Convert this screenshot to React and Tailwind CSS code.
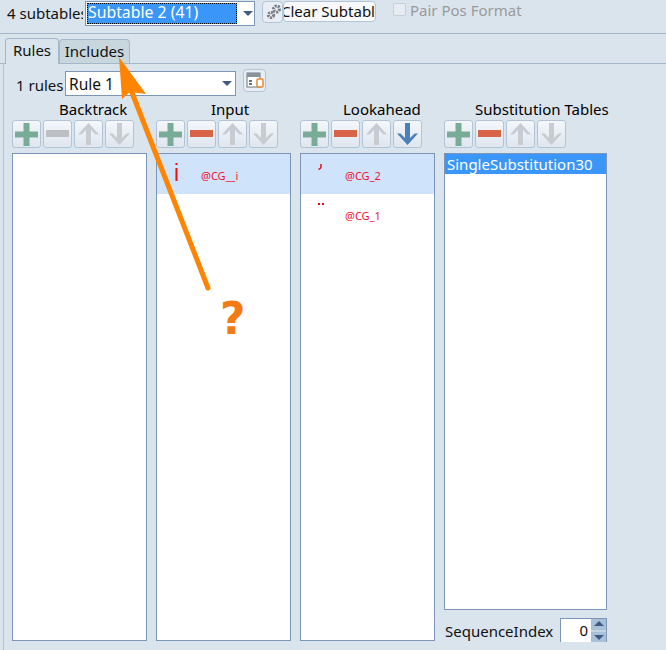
import { useState } from 'react'

const FONT = "font-['Noto_Sans','Open_Sans',sans-serif]"

function Caret() {
  return <div className="w-0 h-0 border-x-[5px] border-x-transparent border-t-[5px] border-t-[#3f5a85]" />
}

function PlusIcon({ on }) {
  return (
    <svg width="23" height="23" viewBox="0 0 23 23">
      <path d="M8.500 0h6v8.500h8.500v6h-8.500v8.500h-6v-8.500h-8.500v-6h8.500z" fill={on ? '#7aab98' : '#c0c4c8'} />
    </svg>
  )
}

function MinusIcon({ on }) {
  return (
    <svg width="23" height="8" viewBox="0 0 23 8">
      <rect width="23" height="7" fill={on ? '#d96548' : '#bcc0c4'} />
    </svg>
  )
}

function ArrowIcon({ dir, on }) {
  const color = on ? '#4a80b8' : '#c8ccd0'
  return (
    <svg width="23" height="24" viewBox="0 0 23 24" className={dir === 'down' ? 'rotate-180' : ''}>
      <path d="M11.500 1l10.500 11.500h-3.500l-4.500-4.500v15h-5v-15l-4.500 4.500h-3.500z" fill={color} />
    </svg>
  )
}

function ToolButton({ children }) {
  return (
    <button className="w-[29px] h-[28px] flex items-center justify-center rounded-[3px] border border-[#b4c4d8] bg-gradient-to-b from-[#f4f7fa] to-[#dfe6ee]">
      {children}
    </button>
  )
}

function Toolbar({ minus, down }) {
  return (
    <div className="flex gap-[2px]">
      <ToolButton><PlusIcon on /></ToolButton>
      <ToolButton><MinusIcon on={minus} /></ToolButton>
      <ToolButton><ArrowIcon dir="up" /></ToolButton>
      <ToolButton><ArrowIcon dir="down" on={down} /></ToolButton>
    </div>
  )
}

function GlyphRow({ glyph, name, selected }) {
  return (
    <div className={`relative h-[40px] ${selected ? 'bg-[#cfe3fa]' : ''}`}>
      <span className="absolute left-[44px] top-[15px] text-[11px] leading-[14px] text-[#f01030]">{name}</span>
      {glyph}
    </div>
  )
}

function Column({ label, labelClass, width, minus, down, children }) {
  return (
    <div className={`flex flex-col ${width}`}>
      <div className={`h-[21px] text-[15px] leading-[20px] text-black whitespace-nowrap ${labelClass}`}>{label}</div>
      <Toolbar minus={minus} down={down} />
      <div className="mt-[5px] h-[488px] border border-[#7d96b8] bg-white overflow-hidden">
        {children}
      </div>
    </div>
  )
}

export default function App() {
  const [tab, setTab] = useState('rules')

  return (
    <div className={`relative w-[666px] h-[650px] overflow-hidden bg-[#dae4ed] text-[15px] text-[#111] ${FONT}`}>
      <div className="h-[34px] border-b border-[#a5b7c8] flex items-start pt-[1px]">
        <div className="w-[76px] ml-[7px] mt-[1px] overflow-hidden whitespace-nowrap leading-[22px]">4 subtables</div>
        <div className="ml-[2px] w-[170px] h-[25px] border border-[#7d96b8] bg-white flex items-center p-[1px]">
          <div className="w-[150px] h-[21px] bg-[#3a96f8] text-white text-[15.800px] leading-[19px] pl-[1px] outline-1 outline-dotted outline-black -outline-offset-1">Subtable 2 (41)</div>
          <div className="ml-[6px]"><Caret /></div>
        </div>
        <div className="ml-[7px] w-[21px] h-[22px] rounded-[4px] border border-[#b4c4d8] bg-[#e8eef4] flex items-center justify-center">
          <svg width="15" height="16" viewBox="0 0 15 16" className="ml-[3px]">
            <circle cx="9.500" cy="5" r="3" fill="none" stroke="#777c82" strokeWidth="3" strokeDasharray="2 1" />
            <circle cx="4" cy="11" r="2.600" fill="none" stroke="#777c82" strokeWidth="3" strokeDasharray="2 1" />
          </svg>
        </div>
        <div className="w-[93px] h-[21px] rounded-[4px] border border-[#b4c4d8] bg-[#f6f8fa] overflow-hidden whitespace-nowrap leading-[18px] -indent-[3px]">Clear Subtable</div>
        <div className="ml-[17px] mt-[2px] w-[13px] h-[13px] rounded-[2px] border border-[#c4d0dc] bg-[#e6ecf2]" />
        <div className="ml-[4px] leading-[18px] text-[#9a9a9a]">Pair Pos Format</div>
      </div>

      <div className="h-[30px] border-b border-[#a5b7c8] flex items-end pl-[5px]">
        <button
          onClick={() => setTab('rules')}
          className="w-[54px] h-[26px] -mb-px border border-b-0 border-[#a5b7c8] rounded-t-[4px] bg-[#dae4ed] text-center leading-[22px] flex justify-center"
        >
          Rules
        </button>
        <button
          onClick={() => setTab('includes')}
          className="w-[71px] h-[24px] border border-b-0 border-[#a5b7c8] rounded-t-[4px] bg-[#c8d6de] text-center leading-[22px] flex justify-center"
        >
          Includes
        </button>
      </div>

      <div className="ml-[3px] border-l border-[#b4c4d4] h-[586px] pl-[8px]">
        {tab === 'rules' && (
          <>
            <div className="h-[31px] flex items-start pt-[7px]">
              <div className="ml-[4px] w-[49px] mt-[3px] whitespace-nowrap leading-[22px]">1 rules</div>
              <div className="w-[171px] h-[25px] border border-[#7d96b8] bg-white flex items-center justify-between pl-[3px] pr-[3px]">
                <span className="leading-[22px] text-[15.500px]">Rule 1</span>
                <Caret />
              </div>
              <div className="ml-[7px] -mt-[2px] w-[23px] h-[23px] rounded-[4px] border border-[#b4c4d8] bg-[#e8eef4] flex items-center justify-center">
                <svg width="18" height="17" viewBox="0 0 18 17">
                  <rect x="1" y="1" width="13" height="14" fill="#fff" stroke="#6d7680" />
                  <rect x="1" y="1" width="13" height="4" fill="#8a929a" />
                  <rect x="3" y="8" width="3" height="2" fill="#6d7680" />
                  <rect x="3" y="11" width="3" height="2" fill="#6d7680" />
                  <rect x="11" y="7" width="6" height="8" rx="1" fill="#fff" stroke="#e88a30" strokeWidth="1.500" />
                </svg>
              </div>
            </div>

            <div className="flex pt-[4px]">
              <Column label="Backtrack" labelClass="pl-[47px]" width="w-[135px]">
              </Column>

              <div className="ml-[9px]">
                <Column label="Input" labelClass="pl-[55px]" width="w-[135px]" minus>
                  <GlyphRow
                    selected
                    name="@CG__i"
                    glyph={<span className="absolute left-[17px] top-[6px] text-[23px] leading-[26px] text-[#f01010] font-['Liberation_Sans',sans-serif]">i</span>}
                  />
                </Column>
              </div>

              <div className="ml-[9px]">
                <Column label="Lookahead" labelClass="pl-[43px]" width="w-[135px]" minus down>
                  <GlyphRow
                    selected
                    name="@CG_2"
                    glyph={
                      <svg className="absolute left-[16px] top-[9px]" width="6" height="8" viewBox="0 0 6 8">
                        <path d="M4 1v3q0 1.500-2.500 2.500" fill="none" stroke="#e01010" strokeWidth="1.500" />
                      </svg>
                    }
                  />
                  <GlyphRow
                    name="@CG_1"
                    glyph={<div className="absolute left-[17px] top-[9px] flex gap-[2px]"><div className="w-[2px] h-[2px] bg-[#e01010]" /><div className="w-[2px] h-[2px] bg-[#e01010]" /></div>}
                  />
                </Column>
              </div>

              <div className="ml-[9px] flex flex-col w-[163px]">
                <div className="h-[21px] text-[15px] leading-[20px] whitespace-nowrap pl-[31px] text-black">Substitution Tables</div>
                <Toolbar minus />
                <div className="mt-[5px] h-[457px] border border-[#7d96b8] bg-white">
                  <div className="h-[20px] bg-[#3a96f8] text-white leading-[20px] pl-[2px]">SingleSubstitution30</div>
                </div>
                <div className="mt-[8px] flex items-start">
                  <div className="w-[116px] pl-[1px] mt-[2px] leading-[22px]">SequenceIndex</div>
                  <div className="w-[47px] h-[24px] border border-b-0 border-[#7d96b8] bg-white flex justify-end">
                    <span className="leading-[22px] pr-[3px]">0</span>
                    <div className="w-[15px] bg-[#a8c0d8] flex flex-col items-center justify-between py-[2px]">
                      <div className="w-0 h-0 border-x-[5px] border-x-transparent border-b-[5px] border-b-[#3f5a85]" />
                      <div className="w-full h-[2px] bg-[#c4d4e4]" />
                      <div className="w-0 h-0 border-x-[5px] border-x-transparent border-t-[5px] border-t-[#3f5a85]" />
                    </div>
                  </div>
                </div>
              </div>
            </div>
          </>
        )}
      </div>

      {/* annotation drawn over the window */}
      <svg className="absolute left-0 top-0 pointer-events-none" width="666" height="650" viewBox="0 0 666 650">
        <line x1="208" y1="288" x2="131" y2="90" stroke="#ff8400" strokeWidth="5" strokeLinecap="round" />
        <path d="M119 57L146 94L130 92L122 99z" fill="#ff8400" />
      </svg>
      <div className="absolute left-[220px] top-[294px] text-[44px] leading-[50px] font-bold text-[#f47a14] font-['DejaVu_Sans',sans-serif]">?</div>
    </div>
  )
}
